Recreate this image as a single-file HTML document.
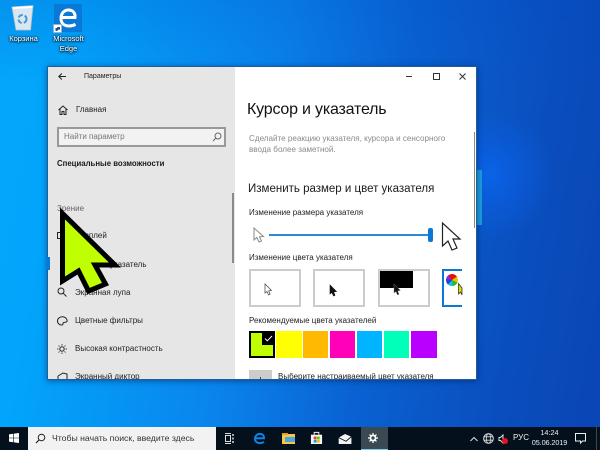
<!DOCTYPE html>
<html lang="ru"><head><meta charset="utf-8"><style>
html,body{margin:0;padding:0}
#r{position:relative;width:600px;height:450px;overflow:hidden;font-family:"Liberation Sans","DejaVu Sans",sans-serif;background:linear-gradient(100deg,#05a6fb 0%,#02a5fb 12%,#0a84ec 42%,#0a62d2 62%,#0a4dbd 85%,#0a45b4 100%)}
.t{position:absolute;white-space:nowrap;line-height:1}
svg{position:absolute;overflow:visible}
.b{position:absolute;box-sizing:border-box}
.i{font-size:8px;color:#222;left:75px}
.w{background:#fff;border:2px solid #ccc;top:269px;width:52px;height:38px}
.s{top:331px;height:27px}
</style></head><body><div id="r">
<div class="b" style="left:0;top:0;width:600px;height:428px;background:radial-gradient(circle at 490px 175px,rgba(10,105,245,.7) 0,rgba(10,100,240,.4) 30px,rgba(10,80,210,0) 65px),linear-gradient(0deg,rgba(0,0,0,0) 80%,rgba(0,70,190,.2) 100%)"></div>
<!-- glow strip -->
<div class="b" style="left:477px;top:170px;width:5px;height:55px;background:#1c9fdc"></div>

<!-- recycle bin and edge -->
<svg style="left:0;top:0" width="90" height="40" viewBox="0 0 90 40"><path d="M12 7L33 5.500 30.500 30H16Z" fill="#dbe6ee" stroke="#b4c4cf" stroke-width=".8"/><path d="M12.500 8L32.500 7" stroke="#fff" stroke-width="2"/><circle cx="22.500" cy="19" r="4" fill="none" stroke="#3f9be0" stroke-width="2" stroke-dasharray="5 2"/>
<rect x="54" y="4" width="28" height="28" fill="#0a78d7"/>
<path d="M61.500 17.500H75C75.500 12.500 72.500 10 68.500 10C64 10 61 13.500 61 18.500C61 23.500 64.500 26 69 26C71.800 26 73.800 25.300 75.500 24.300" fill="none" stroke="#fff" stroke-width="3"/>
<rect x="53.500" y="24.500" width="8" height="8" fill="#fff" stroke="#aaa" stroke-width=".8"/><path d="M55.500 31V28H57.500L57 27 60 27V30L59 29.200 57 31Z" fill="#1a4f9c"/></svg>
<div class="t" style="left:0;top:35px;width:47px;text-align:center;font-size:7.500px;color:#fff;text-shadow:0 0 2px #000,0 1px 2px #000">Корзина</div>
<div class="t" style="left:47px;top:34px;width:43px;text-align:center;font-size:7.500px;line-height:10px;color:#fff;text-shadow:0 0 2px #000,0 1px 2px #000">Microsoft<br>Edge</div>

<!-- window -->
<div class="b" style="left:47px;top:66px;width:430px;height:314px;background:#1f5f96;box-shadow:0 1px 6px rgba(0,30,90,.55)"></div>
<div class="b" style="left:48px;top:67px;width:187px;height:312px;background:#e6e6e6"></div>
<div class="b" style="left:235px;top:67px;width:241px;height:312px;background:#fff"></div>

<svg style="left:58px;top:73px" width="8" height="7" viewBox="0 0 8 7"><path d="M8 3.500H.8M3.800 .5L.8 3.500l3 3" fill="none" stroke="#222" stroke-width="1"/></svg>
<div class="t" style="left:84px;top:73px;font-size:7px;color:#222">Параметры</div>
<svg style="left:58px;top:105px" width="10" height="10" viewBox="0 0 10 10"><path d="M.5 5L5 1l4.500 4M2 4v5.500h2V6.500h2v3h2V4" fill="none" stroke="#222" stroke-width="1"/></svg>
<div class="t" style="left:76px;top:106px;font-size:8px;color:#222">Главная</div>

<div class="b" style="left:57px;top:127px;width:169px;height:20px;background:#f2f2f2;border:2px solid #999"></div>
<div class="t" style="left:64px;top:133px;font-size:8px;color:#777">Найти параметр</div>
<svg style="left:212px;top:132px" width="10" height="10" viewBox="0 0 10 10"><circle cx="6" cy="4" r="3" fill="none" stroke="#666" stroke-width="1"/><path d="M3.800 6.200L1 9" stroke="#666" stroke-width="1"/></svg>
<div class="t" style="left:57px;top:160px;font-size:7.800px;font-weight:bold;color:#1a1a1a">Специальные возможности</div>
<div class="b" style="left:232px;top:193px;width:2px;height:70px;background:#8a8a8a"></div>

<div class="t" style="left:57px;top:205px;font-size:8px;color:#666">Зрение</div>
<div class="b" style="left:57px;top:232px;width:8px;height:7px;border:1px solid #222"></div>
<div class="t i" style="top:232px">Дисплей</div>
<div class="b" style="left:47px;top:257px;width:3px;height:13px;background:#0a78d7"></div>
<div class="t i" style="top:261px">Курсор и указатель</div>
<svg style="left:57px;top:287px" width="10" height="10" viewBox="0 0 10 10"><circle cx="4" cy="4" r="3" fill="none" stroke="#222" stroke-width="1"/><path d="M6.300 6.300L9.500 9.500" stroke="#222" stroke-width="1"/></svg>
<div class="t i" style="top:289px">Экранная лупа</div>
<svg style="left:57px;top:316px" width="11" height="10" viewBox="0 0 11 10"><path d="M5.500 .7C2.500 .7.500 2.600.500 5c0 2.500 2.300 4.300 4.500 4 1.300-.2.800-1.500 1.200-2.200.5-.8 2.400 0 3.500-1C11 4.500 9 .7 5.500 .7Z" fill="none" stroke="#222" stroke-width="1"/></svg>
<div class="t i" style="top:317px">Цветные фильтры</div>
<svg style="left:57px;top:344px" width="10" height="10" viewBox="0 0 10 10"><circle cx="5" cy="5" r="2.200" fill="none" stroke="#222" stroke-width="1"/><path d="M5 0v1.500M5 8.500V10M0 5h1.500M8.500 5H10M1.500 1.500l1 1M7.500 7.500l1 1M1.500 8.500l1-1M7.500 2.500l1-1" stroke="#222" stroke-width=".8"/></svg>
<div class="t i" style="top:345px">Высокая контрастность</div>
<svg style="left:57px;top:372px" width="11" height="7" viewBox="0 0 11 7"><path d="M1 4L6 1l4 1v3M1 4v3M10 5v2" fill="none" stroke="#222" stroke-width="1"/></svg>
<div class="t i" style="top:373px;height:6px;overflow:hidden">Экранный диктор</div>

<!-- window buttons -->
<svg style="left:405px;top:72px" width="66" height="10" viewBox="0 0 66 10"><path d="M1 4.500H7" stroke="#333" stroke-width="1"/><rect x="28.500" y="1.500" width="6" height="6" fill="none" stroke="#333" stroke-width="1"/><path d="M54.500 1.500l6 6M60.500 1.500l-6 6" stroke="#333" stroke-width="1"/></svg>

<!-- right content -->
<div class="t" style="left:247px;top:102px;font-size:16px;letter-spacing:-.2px;color:#111">Курсор и указатель</div>
<div class="t" style="left:249px;top:133px;font-size:8.100px;line-height:11px;color:#8a8a8a">Сделайте реакцию указателя, курсора и сенсорного<br>ввода более заметной.</div>
<div class="t" style="left:248px;top:184px;font-size:11.500px;color:#1a1a1a">Изменить размер и цвет указателя</div>
<div class="t" style="left:249px;top:209px;font-size:8px;color:#222">Изменение размера указателя</div>
<div class="b" style="left:474px;top:132px;width:1px;height:96px;background:#888"></div>

<svg style="left:253px;top:227px" width="12" height="16" viewBox="0 0 12 16"><path d="M1 1V13L3.800 10.500 6 15 8.500 14 6.500 9.800 10.500 9.500Z" fill="#fff" stroke="#888" stroke-width="1"/></svg>
<div class="b" style="left:269px;top:234px;width:162px;height:2px;background:#2a88d8"></div>
<div class="b" style="left:428px;top:228px;width:5px;height:14px;background:#0a78d7;border-radius:2px"></div>
<svg style="left:0;top:0" width="600" height="450" viewBox="0 0 600 450"><path d="M442.500 223V246L448 241 452 250 457 248 453 239 460 239Z" fill="#fff" stroke="#222" stroke-width="1.200"/></svg>

<div class="t" style="left:249px;top:254px;font-size:8px;color:#222">Изменение цвета указателя</div>
<div class="b w" style="left:249px"></div>
<svg style="left:264px;top:283px" width="9" height="13" viewBox="0 0 9 13"><path d="M1 1V10L3 8.500 4.500 12 6 11.300 4.700 7.800 7.500 7.500Z" fill="#fff" stroke="#555" stroke-width=".8"/></svg>
<div class="b w" style="left:313px"></div>
<svg style="left:329px;top:284px" width="9" height="13" viewBox="0 0 9 13"><path d="M1 1V10L3 8.500 4.500 12 6 11.300 4.700 7.800 7.500 7.500Z" fill="#111" stroke="#111" stroke-width=".6"/></svg>
<div class="b w" style="left:378px"></div>
<div class="b" style="left:380px;top:271px;width:33px;height:17px;background:#000"></div>
<svg style="left:393px;top:283px" width="9" height="13" viewBox="0 0 9 13"><path d="M1 1V10L3 8.500 4.500 12 6 11.300 4.700 7.800 7.500 7.500Z" fill="#111" stroke="#888" stroke-width=".4"/></svg>
<div class="b" style="left:442px;top:269px;width:20px;height:38px;background:#fff;border:2px solid #0a78d7;border-right:0"></div>
<div class="b" style="left:446px;top:274px;width:12px;height:12px;border-radius:50%;background:conic-gradient(#e01010 0 15%,#f0c000 15% 32%,#20c020 32% 48%,#10c0e0 48% 62%,#2040e0 62% 78%,#a020c0 78% 90%,#e01010 90%)"></div>
<svg style="left:458px;top:283px" width="5" height="13" viewBox="0 0 5 13"><path d="M.5 .5V11L2.500 9 4 12V5Z" fill="#d6e000" stroke="#222" stroke-width=".7"/></svg>

<div class="t" style="left:249px;top:317px;font-size:8px;color:#222">Рекомендуемые цвета указателей</div>
<div class="b s" style="left:249px;width:26px;background:#bfff00;border:2px solid #000"></div>
<div class="b" style="left:262px;top:331px;width:13px;height:14px;background:#000"></div>
<svg style="left:264px;top:335px" width="9" height="7" viewBox="0 0 9 7"><path d="M1 3.500L3.300 5.800 8 1" fill="none" stroke="#fff" stroke-width="1"/></svg>
<div class="b s" style="left:276px;width:26px;background:#ffff00"></div>
<div class="b s" style="left:303px;width:25px;background:#ffb900"></div>
<div class="b s" style="left:330px;width:25px;background:#ff00b9"></div>
<div class="b s" style="left:357px;width:25px;background:#00b4ff"></div>
<div class="b s" style="left:384px;width:25px;background:#00ffb9"></div>
<div class="b s" style="left:411px;width:26px;background:#b900ff"></div>
<div class="b" style="left:249px;top:370px;width:23px;height:9px;background:#ccc"></div>
<div class="b" style="left:260px;top:377px;width:1px;height:2px;background:#444"></div>
<div class="t" style="left:278px;top:373px;height:6px;overflow:hidden;font-size:8px;color:#222">Выберите настраиваемый цвет указателя</div>

<!-- big cursor -->
<svg style="left:0;top:0" width="600" height="450" viewBox="0 0 600 450"><path d="M62.500 213.500V281L78.500 271 88.500 291 105.500 284 95 265 115 265Z" fill="#bfff00" stroke="#000" stroke-width="5"/></svg>

<!-- taskbar -->
<div class="b" style="left:0;top:427px;width:600px;height:23px;background:#04111d"></div>
<svg style="left:9px;top:433px" width="10" height="10" viewBox="0 0 11 11"><path d="M0 1.500L4.800 .8V5.200H0ZM5.500 .7L11 0V5.200H5.500ZM0 5.800H4.800V10.200L0 9.500ZM5.500 5.800H11V11L5.500 10.300Z" fill="#fff"/></svg>
<div class="b" style="left:28px;top:427px;width:188px;height:23px;background:#f2f2f2"></div>
<svg style="left:35px;top:433px" width="11" height="11" viewBox="0 0 11 11"><circle cx="6.500" cy="4.500" r="3.300" fill="none" stroke="#222" stroke-width="1"/><path d="M4 7L1 10" stroke="#222" stroke-width="1.200"/></svg>
<div class="t" style="left:52px;top:434px;font-size:8.700px;color:#333">Чтобы начать поиск, введите здесь</div>
<svg style="left:224px;top:433px" width="11" height="11" viewBox="0 0 11 11"><path d="M1 .5h6M1 10.500h6" stroke="#ddd" stroke-width="1"/><rect x="1.500" y="2.500" width="5" height="6" fill="none" stroke="#ddd" stroke-width="1"/><path d="M9 1v2M9 4.500v2M9 8v2" stroke="#ddd" stroke-width="1.500"/></svg>
<svg style="left:254px;top:433px" width="11" height="11" viewBox="0 0 11 11"><path d="M1 5.300H10C10 2 8 .9 6 .9C3 .9 1 3 1 5.800C1 8.800 3.300 10.100 5.800 10.100C7.500 10.100 8.800 9.700 10 9" fill="none" stroke="#0a84e8" stroke-width="2"/></svg>
<div class="b" style="left:282px;top:434px;width:13px;height:10px;background:#f6c844"></div>
<div class="b" style="left:282px;top:433px;width:6px;height:2px;background:#e0a020"></div>
<div class="b" style="left:285px;top:437px;width:10px;height:5px;background:#4da6e0"></div>
<svg style="left:310px;top:431px" width="13" height="13" viewBox="0 0 14 14"><path d="M1 4H13V14H1Z" fill="#f4f4f4"/><path d="M4.500 4V1.500h5V4" fill="none" stroke="#f4f4f4" stroke-width="1"/><rect x="4" y="6" width="3" height="3" fill="#e8401c"/><rect x="7.500" y="6" width="3" height="3" fill="#7cbb00"/><rect x="4" y="9.500" width="3" height="3" fill="#00a1f1"/><rect x="7.500" y="9.500" width="3" height="3" fill="#ffbb00"/></svg>
<svg style="left:338px;top:434px" width="15" height="10" viewBox="0 0 15 11"><path d="M0 4L7 0 14 3V11H0Z" fill="#f4f4f4"/><path d="M0 4L8 8 14 3" fill="none" stroke="#04111d" stroke-width="1"/></svg>
<div class="b" style="left:361px;top:427px;width:27px;height:23px;background:#3b4a52"></div>
<div class="b" style="left:361px;top:449px;width:27px;height:1px;background:#7fc4ee"></div>
<svg style="left:368px;top:433px" width="10" height="10" viewBox="0 0 13 13"><circle cx="6.500" cy="6.500" r="3.300" fill="none" stroke="#fff" stroke-width="2.200"/><path d="M6.500 0v3M6.500 10v3M0 6.500h3M10 6.500h3M2 2l2 2M9 9l2 2M2 11l2-2M9 4l2-2" stroke="#fff" stroke-width="1.700"/></svg>
<svg style="left:470px;top:436px" width="8" height="6" viewBox="0 0 8 6"><path d="M.5 5L4 1.500 7.500 5" fill="none" stroke="#ddd" stroke-width="1"/></svg>
<svg style="left:483px;top:433px" width="11" height="11" viewBox="0 0 11 11"><circle cx="5.500" cy="5.500" r="4.800" fill="none" stroke="#ddd" stroke-width="1"/><ellipse cx="5.500" cy="5.500" rx="2.200" ry="4.800" fill="none" stroke="#ddd" stroke-width=".8"/><path d="M1 3.800h9M1 7.200h9" stroke="#ddd" stroke-width=".8"/></svg>
<svg style="left:497px;top:434px" width="8" height="10" viewBox="0 0 8 10"><path d="M2 3.500h1.500L6 1v8L3.500 6.500H2Z" fill="none" stroke="#ddd" stroke-width="1"/></svg>
<div class="b" style="left:502px;top:438px;width:6px;height:6px;border-radius:50%;background:#e81123"></div>
<div class="t" style="left:513px;top:434px;font-size:8px;color:#eee">РУС</div>
<div class="t" style="left:530px;top:428px;width:39px;text-align:center;font-size:7.300px;line-height:10px;color:#eee">14:24<br><span style="letter-spacing:-.1px">05.06.2019</span></div>
<svg style="left:575px;top:433px" width="11" height="11" viewBox="0 0 11 11"><path d="M.5 .5H10.500V8H7.500L5.500 10V8H.5Z" fill="none" stroke="#eee" stroke-width="1"/></svg>
<div class="b" style="left:596px;top:427px;width:1px;height:23px;background:#444"></div>
</div></body></html>
